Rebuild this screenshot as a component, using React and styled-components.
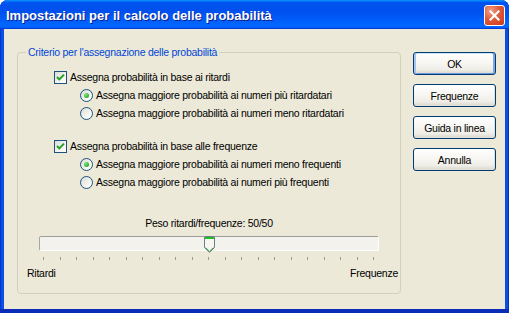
import React from 'react'
import styled, { createGlobalStyle } from 'styled-components'

const GlobalStyle = createGlobalStyle`
  html, body {
    margin: 0;
    padding: 0;
    background: #ffffff;
  }
  body {
    font-family: "Liberation Sans", Arial, sans-serif;
    font-size: 10.5px;
    letter-spacing: -0.25px;
    color: #000000;
  }
`

const Window = styled.div`
  width: 509px;
  height: 313px;
  display: flex;
  flex-direction: column;
  background: #0b4fe0;
  box-shadow: inset 0 -4px #0a2cb8, inset 1px 0 #0831d9, inset -1px 0 #0a2cb8;
  border-radius: 8px 8px 0 0;
  overflow: hidden;
`

const TitleBar = styled.div`
  height: 29px;
  flex: none;
  display: flex;
  align-items: center;
  justify-content: space-between;
  padding: 0 4px 0 6px;
  background: linear-gradient(180deg, #0997ff 0%, #0053ee 9%, #0050ee 40%, #0066ff 86%, #0066ff 92%, #005bff 95%, #003dd7 97%, #003dd7 100%);
`

const Title = styled.span`
  color: #ffffff;
  font-family: "Liberation Sans", Arial, sans-serif;
  font-weight: bold;
  font-size: 13px;
  letter-spacing: 0;
  text-shadow: 1px 1px #0f1c8f;
  margin-top: 1px;
`

const CloseButton = styled.div`
  width: 21px;
  height: 21px;
  box-sizing: border-box;
  border: 1px solid #ffffff;
  border-radius: 3px;
  background: radial-gradient(circle at 30% 25%, #f0a08a 0%, #e2583a 45%, #c53c1b 100%);
  display: flex;
  align-items: center;
  justify-content: center;
  margin-top: 2px;
`

const Client = styled.div`
  flex: 1;
  margin: 0 4px 4px;
  background: #ece9d8;
  display: flex;
  align-items: flex-start;
  gap: 12px;
  padding: 17px 9px 0 13px;
`

const GroupBox = styled.fieldset`
  margin: 0;
  padding: 0;
  width: 384px;
  height: 248px;
  box-sizing: border-box;
  border: 1px solid #d0d0bf;
  border-radius: 4px;
  display: flex;
  flex-direction: column;
`

const GroupLabel = styled.legend`
  margin-left: 8px;
  padding: 0 2px;
  color: #0046d5;
  line-height: 13px;
`

const Options = styled.div`
  display: flex;
  flex-direction: column;
  padding: 9px 0 0 36px;
`

const Section = styled.div`
  display: flex;
  flex-direction: column;
  margin-bottom: ${p => p.$gap || 0}px;
`

const Row = styled.label`
  height: 18px;
  display: flex;
  align-items: center;
  gap: 3px;
  padding-left: ${p => (p.$indent ? 26 : 0)}px;
  white-space: nowrap;
`

const CheckBox = styled.span`
  width: 13px;
  height: 13px;
  box-sizing: border-box;
  flex: none;
  border: 1px solid #1c5180;
  background: linear-gradient(135deg, #dcdcd7 0%, #f4f4f0 60%, #ffffff 100%);
  display: flex;
  align-items: center;
  justify-content: center;
`

const Radio = styled.span`
  width: 13px;
  height: 13px;
  box-sizing: border-box;
  flex: none;
  border-radius: 50%;
  border: 1px solid #1c5180;
  background: linear-gradient(135deg, #dcdcd7 0%, #f4f4f0 60%, #ffffff 100%);
  display: flex;
  align-items: center;
  justify-content: center;
`

const RadioDot = styled.span`
  width: 5px;
  height: 5px;
  border-radius: 50%;
  background: radial-gradient(circle at 35% 35%, #8fe48b 0%, #3cbf3a 50%, #1f9a1f 100%);
`

const SliderArea = styled.div`
  display: flex;
  flex-direction: column;
  margin-top: 25px;
`

const SliderCaption = styled.div`
  text-align: center;
  line-height: 14px;
`

const Track = styled.div`
  position: relative;
  height: 15px;
  margin: 6px 21px 0;
  box-sizing: border-box;
  border: 1px solid;
  border-color: #9d9d9d #ffffff #ffffff #a7a6a0;
  border-radius: 2px;
  background: #f3f2ec;
`

const Thumb = styled.svg`
  position: absolute;
  top: -1px;
  left: 50%;
  margin-left: -5px;
`

const Ticks = styled.div`
  display: flex;
  justify-content: space-between;
  padding: 0 26px 0 25px;
  margin-top: 6px;
`

const Tick = styled.span`
  width: 1px;
  height: 3px;
  background: #9a9a96;
`

const EndLabels = styled.div`
  display: flex;
  justify-content: space-between;
  padding: 0 2px 0 9px;
  margin-top: 6px;
  line-height: 14px;
`

const ButtonColumn = styled.div`
  display: flex;
  flex-direction: column;
  gap: 9px;
  padding-top: 6px;
`

const Button = styled.button`
  width: 83px;
  height: 23px;
  box-sizing: border-box;
  border: 1px solid #003c74;
  border-radius: 3px;
  font-family: "Liberation Sans", Arial, sans-serif;
  font-size: 10.5px;
  letter-spacing: -0.25px;
  color: #000000;
  padding: 0;
  background: linear-gradient(180deg, #ffffff 0%, #f7f6f2 45%, #eeede7 80%, #d8d3c8 100%);
  box-shadow: ${p =>
    p.$default
      ? 'inset 2px 0 #a8c4f0, inset -2px 0 #7ea6e6, inset 0 1px #cee7ff, inset 0 -1px #6d96e0'
      : 'inset -1px -1px #e3dfd2'};
`

function CheckMark() {
  return (
    <svg width="9" height="9" viewBox="0 0 9 9">
      <path d="M1 4 L3.3 6.4 L8 1.6" fill="none" stroke="#21a121" strokeWidth="2" />
    </svg>
  )
}

function ThumbShape() {
  return (
    <Thumb width="11" height="17" viewBox="0 0 11 17">
      <path
        d="M0.5 2 Q0.5 0.5 2 0.5 H9 Q10.5 0.5 10.5 2 V11.5 L5.5 16.5 L0.5 11.5 Z"
        fill="#f7f6f1"
        stroke="#6c7c8c"
      />
      <rect x="1" y="1" width="9" height="2" fill="#21c021" />
      <path d="M1.5 11.5 L5.5 15.3 L9.5 11.5" fill="none" stroke="#3cb83c" />
    </Thumb>
  )
}

const tickCount = 21

export default function App() {
  return (
    <>
      <GlobalStyle />
      <Window>
        <TitleBar>
          <Title>Impostazioni per il calcolo delle probabilità</Title>
          <CloseButton>
            <svg width="11" height="11" viewBox="0 0 11 11">
              <path d="M1.5 1.5 L9.5 9.5 M9.5 1.5 L1.5 9.5" stroke="#ffffff" strokeWidth="2.2" strokeLinecap="square" />
            </svg>
          </CloseButton>
        </TitleBar>
        <Client>
          <GroupBox>
            <GroupLabel>Criterio per l'assegnazione delle probabilità</GroupLabel>
            <Options>
              <Section $gap={15}>
                <Row>
                  <CheckBox><CheckMark /></CheckBox>
                  Assegna probabilità in base ai ritardi
                </Row>
                <Row $indent>
                  <Radio><RadioDot /></Radio>
                  Assegna maggiore probabilità ai numeri più ritardatari
                </Row>
                <Row $indent>
                  <Radio />
                  Assegna maggiore probabilità ai numeri meno ritardatari
                </Row>
              </Section>
              <Section>
                <Row>
                  <CheckBox><CheckMark /></CheckBox>
                  Assegna probabilità in base alle frequenze
                </Row>
                <Row $indent>
                  <Radio><RadioDot /></Radio>
                  Assegna maggiore probabilità ai numeri meno frequenti
                </Row>
                <Row $indent>
                  <Radio />
                  Assegna maggiore probabilità ai numeri più frequenti
                </Row>
              </Section>
            </Options>
            <SliderArea>
              <SliderCaption>Peso ritardi/frequenze: 50/50</SliderCaption>
              <Track>
                <ThumbShape />
              </Track>
              <Ticks>
                {Array.from({ length: tickCount }, (_, i) => (
                  <Tick key={i} />
                ))}
              </Ticks>
              <EndLabels>
                <span>Ritardi</span>
                <span>Frequenze</span>
              </EndLabels>
            </SliderArea>
          </GroupBox>
          <ButtonColumn>
            <Button $default>OK</Button>
            <Button>Frequenze</Button>
            <Button>Guida in linea</Button>
            <Button>Annulla</Button>
          </ButtonColumn>
        </Client>
      </Window>
    </>
  )
}
